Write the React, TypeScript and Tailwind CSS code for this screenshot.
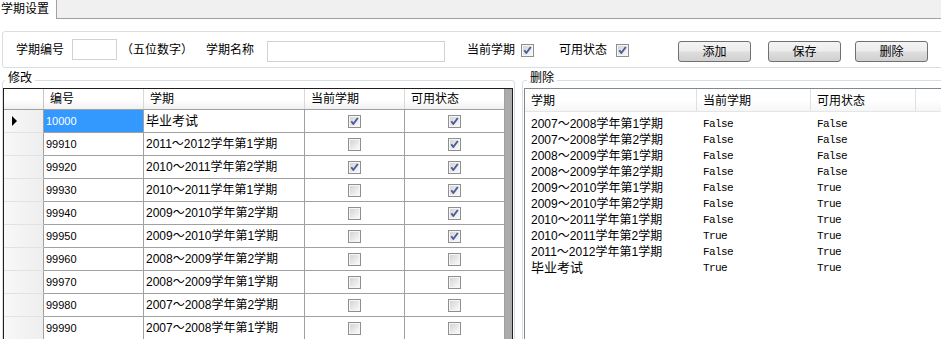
import React from "react";

const SANS = "font-['Liberation_Sans','Noto_Sans_CJK_SC',sans-serif]";
const MONO = "font-['Liberation_Mono','Noto_Sans_CJK_SC',monospace]";

function Check({ on }: { on: boolean }) {
  return (
    <svg width="13" height="13" viewBox="0 0 13 13" className="block">
      <defs>
        <linearGradient id="cbg" x1="0" y1="0" x2="1" y2="1">
          <stop offset="0" stopColor="#d4d4d4" />
          <stop offset="1" stopColor="#f9f9f9" />
        </linearGradient>
      </defs>
      <rect x="0.5" y="0.5" width="12" height="12" fill="#f6f6f6" stroke="#8e8f8f" />
      <rect x="2" y="2" width="9" height="9" fill="url(#cbg)" />
      {on && (
        <path d="M3.3 6.3 L5.3 9 L9.8 3" fill="none" stroke="#4a5a9a" strokeWidth="1.9" strokeLinejoin="round" />
      )}
    </svg>
  );
}

function Btn({ label }: { label: string }) {
  return (
    <button className="w-[73px] h-[21px] mt-[4px] border border-[#707070] rounded-[3px] bg-[linear-gradient(#f4f4f4,#ececec_48%,#dedede_52%,#d0d0d0)] text-[12px] leading-none text-black flex items-center justify-center">
      {label}
    </button>
  );
}

const gridRows: [string, string, boolean, boolean][] = [
  ["10000", "毕业考试", true, true],
  ["99910", "2011～2012学年第1学期", false, true],
  ["99920", "2010～2011学年第2学期", true, true],
  ["99930", "2010～2011学年第1学期", false, true],
  ["99940", "2009～2010学年第2学期", false, true],
  ["99950", "2009～2010学年第1学期", false, true],
  ["99960", "2008～2009学年第2学期", false, false],
  ["99970", "2008～2009学年第1学期", false, false],
  ["99980", "2007～2008学年第2学期", false, false],
  ["99990", "2007～2008学年第1学期", false, false],
];

const listRows: [string, string, string][] = [
  ["2007～2008学年第1学期", "False", "False"],
  ["2007～2008学年第2学期", "False", "False"],
  ["2008～2009学年第1学期", "False", "False"],
  ["2008～2009学年第2学期", "False", "False"],
  ["2009～2010学年第1学期", "False", "True"],
  ["2009～2010学年第2学期", "False", "True"],
  ["2010～2011学年第1学期", "False", "True"],
  ["2010～2011学年第2学期", "True", "True"],
  ["2011～2012学年第1学期", "False", "True"],
  ["毕业考试", "True", "True"],
];

export default function App() {
  return (
    <div className={`w-[941px] h-[339px] overflow-hidden bg-white text-black ${SANS}`}>
      {/* tab strip */}
      <div className="flex h-[19px]">
        <div className="w-[56px] bg-white text-[12px] leading-[18px] pl-[1px]">学期设置</div>
        <div className="flex-1 bg-[#f0f0f0] border-l border-b border-[#a0a0a0]" />
      </div>

      {/* top group */}
      <div className="mt-[12px] ml-[2px] w-[945px] h-[37px] border border-[#d5dfe5] rounded-[3px] flex items-center text-[12px] leading-[14px]">
        <span className="ml-[13px]">学期编号</span>
        <div className="ml-[8px] w-[45px] h-[21px] border border-[#cfd3d8] bg-white" />
        <span className="ml-[4px]">（五位数字）</span>
        <span className="ml-[13px]">学期名称</span>
        <div className="ml-[13px] mt-[4px] w-[178px] h-[21px] border border-[#cfd3d8] bg-white" />
        <span className="ml-[22px]">当前学期</span>
        <div className="ml-[6px] mt-[2px]">
          <Check on />
        </div>
        <span className="ml-[25px]">可用状态</span>
        <div className="ml-[9px] mt-[2px]">
          <Check on />
        </div>
        <div className="ml-[49px]">
          <Btn label="添加" />
        </div>
        <div className="ml-[17px]">
          <Btn label="保存" />
        </div>
        <div className="ml-[14px]">
          <Btn label="删除" />
        </div>
      </div>

      {/* lower groups */}
      <div className="flex mt-[4px]">
        <fieldset className="ml-[2px] w-[513px] h-[300px] min-w-0 shrink-0 border border-[#d5dfe5] rounded-[3px]">
          <legend className="ml-[2px] px-[3px] text-[12px] leading-[12px] pb-[4px]">修改</legend>
          {/* data grid */}
          <div className="w-[510px] h-[260px] border border-[#202020] flex">
            <div className="w-[500px] flex flex-col">
              {/* header */}
              <div className="flex h-[21px] border-b border-[#a0a0a0] bg-[linear-gradient(#ffffff,#ffffff_55%,#f1f1f1)] text-[12px] leading-[20px]">
                <div className="w-[40px] border-r border-[#c8c8c8]" />
                <div className="w-[100px] border-r border-[#d8d8d8] pl-[6px]">编号</div>
                <div className="w-[161px] border-r border-[#d8d8d8] pl-[6px]">学期</div>
                <div className="w-[100px] border-r border-[#d8d8d8] pl-[6px]">当前学期</div>
                <div className="w-[99px] pl-[6px]">可用状态</div>
              </div>
              {gridRows.map((r, i) => (
                <div key={r[0]} className="flex h-[23px] shrink-0">
                  <div className="w-[40px] border-r border-[#a0a0a0] border-b border-b-[#e2e2e2] bg-[linear-gradient(90deg,#f8f8f8,#eeeeee)] flex items-center pl-[8px]">
                    {i === 0 && (
                      <svg width="6" height="10" viewBox="0 0 6 10" className="block">
                        <path d="M0 0 L5 5 L0 10 Z" fill="#000" />
                      </svg>
                    )}
                  </div>
                  <div
                    className={`w-[100px] border-r border-b border-[#a0a0a0] text-[11px] leading-[22px] pl-[2px] ${
                      i === 0 ? "bg-[#3399ff] text-white" : "bg-white"
                    }`}
                  >
                    {r[0]}
                  </div>
                  <div className={`w-[161px] border-r border-b border-[#a0a0a0] bg-white pl-[2px] leading-[22px] ${i === 0 ? "text-[13px]" : "text-[12px]"}`}>
                    {r[1]}
                  </div>
                  <div className="w-[100px] border-r border-b border-[#a0a0a0] bg-white flex items-center justify-center">
                    <Check on={r[2]} />
                  </div>
                  <div className="w-[99px] border-b border-[#a0a0a0] bg-white flex items-center justify-center">
                    <Check on={r[3]} />
                  </div>
                </div>
              ))}
            </div>
            <div className="flex-1 bg-[#ababab] border-l border-[#a0a0a0]" />
          </div>
        </fieldset>

        <fieldset className="ml-[7px] w-[425px] h-[300px] min-w-0 shrink-0 border border-[#d5dfe5] rounded-[3px]">
          <legend className="ml-[4px] px-[3px] text-[12px] leading-[12px] pb-[4px]">删除</legend>
          {/* list view */}
          <div className="ml-[1px] w-[430px] h-[260px] border border-[#828790] bg-white">
            <div className="flex h-[23px] border-b border-[#e5e5e5] bg-[linear-gradient(#ffffff,#ffffff_50%,#f5f6f7)] text-[12px] leading-[24px]">
              <div className="w-[172px] border-r border-[#e0e0e0] pl-[6px]">学期</div>
              <div className="w-[114px] border-r border-[#e0e0e0] pl-[6px]">当前学期</div>
              <div className="w-[105px] border-r border-[#e0e0e0] pl-[6px]">可用状态</div>
              <div className="flex-1" />
            </div>
            <div className="pt-[4px]">
              {listRows.map((r, i) => (
                <div key={i} className="flex h-[16px] items-center">
                  <div className={`w-[172px] pl-[6px] leading-[16px] ${i === 9 ? "text-[13px]" : "text-[12px]"}`}>{r[0]}</div>
                  <div className={`w-[114px] pl-[6px] text-[11px] tracking-[-0.6px] leading-[16px] ${MONO}`}>{r[1]}</div>
                  <div className={`w-[105px] pl-[6px] text-[11px] tracking-[-0.6px] leading-[16px] ${MONO}`}>{r[2]}</div>
                </div>
              ))}
            </div>
          </div>
        </fieldset>
      </div>
    </div>
  );
}
